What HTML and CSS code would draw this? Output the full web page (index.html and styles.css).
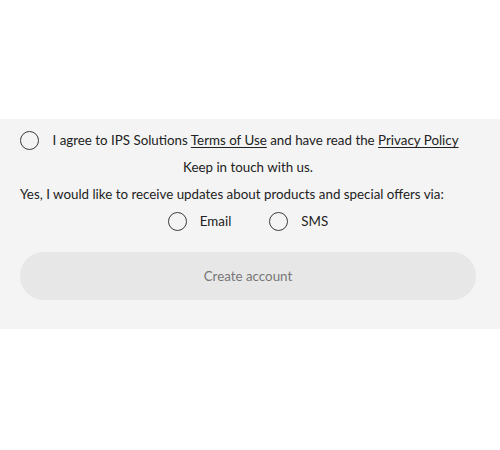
FILE: index.html
```html
<!DOCTYPE html>
<html>
<head>
<meta charset="utf-8">
<link rel="stylesheet" href="styles.css">
</head>
<body>
<form class="panel">
  <label class="row agree">
    <span class="radio"></span>
    <span>I agree to IPS Solutions <a href="#" class="link">Terms of Use</a> and have read the <a href="#" class="link">Privacy Policy</a></span>
  </label>
  <p class="row center">Keep in touch with us.</p>
  <p class="row">Yes, I would like to receive updates about products and special offers via:</p>
  <div class="row center options">
    <label class="option"><span class="radio"></span><span>Email</span></label>
    <label class="option"><span class="radio"></span><span>SMS</span></label>
  </div>
  <button type="button" class="submit">Create account</button>
</form>
</body>
</html>
```
FILE: styles.css
```css
html, body {
  margin: 0;
  padding: 0;
  background: #ffffff;
}
body {
  font-family: Lato, "Liberation Sans", sans-serif;
  font-size: 13.35px;
  color: #222222;
}
.panel {
  margin-top: 119px;
  background: #f4f4f4;
  padding: 7.5px 24px 28.5px 20px;
  display: flex;
  flex-direction: column;
}
.row {
  margin: 0;
  height: 27px;
  display: flex;
  align-items: center;
  white-space: nowrap;
}
.center {
  justify-content: center;
}
.agree {
  gap: 13.5px;
}
.radio {
  box-sizing: border-box;
  width: 19px;
  height: 19px;
  border: 1.5px solid #3a3a3a;
  border-radius: 50%;
  flex: none;
}
.link {
  color: inherit;
  text-decoration: underline;
  text-underline-offset: 2px;
}
.options {
  gap: 38px;
}
.option {
  display: flex;
  align-items: center;
  gap: 13px;
}
.submit {
  margin-top: 17.5px;
  height: 48px;
  border: none;
  border-radius: 24px;
  background: #e7e7e7;
  color: #777777;
  font-family: inherit;
  font-size: 13.35px;
}
```
